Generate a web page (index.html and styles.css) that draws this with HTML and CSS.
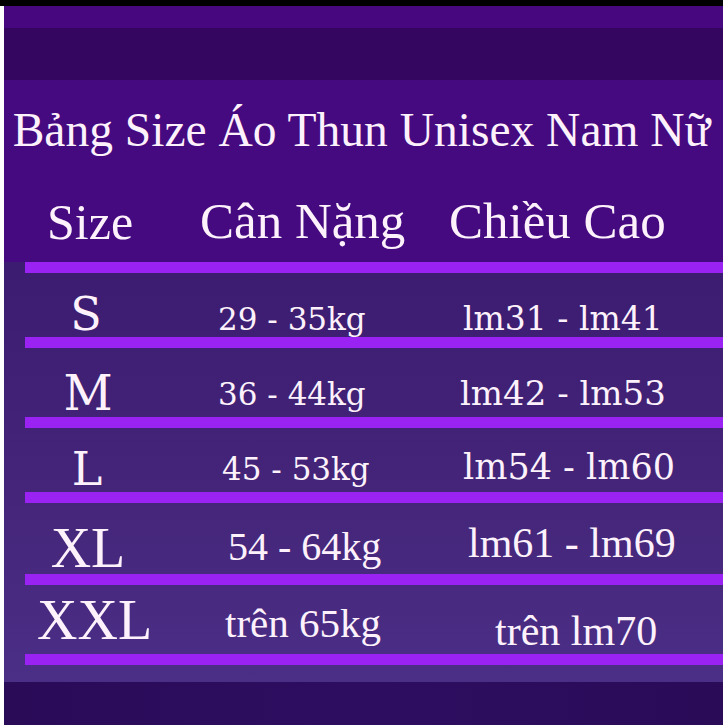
FILE: index.html
```html
<!DOCTYPE html>
<html lang="vi">
<head>
<meta charset="utf-8">
<title>Bảng Size Áo Thun Unisex Nam Nữ</title>
<link rel="stylesheet" href="styles.css">
</head>
<body>
<div class="page">
  <div class="poster">
    <div class="topbar"></div>
    <div class="band1"></div>
    <div class="band2"></div>
    <div class="head">
      <h1 class="title">Bảng Size Áo Thun Unisex Nam Nữ</h1>
      <div class="row hdr">
        <div class="cell c1">Size</div>
        <div class="cell c2">Cân Nặng</div>
        <div class="cell c3">Chiều Cao</div>
      </div>
    </div>
    <div class="table">
      <div class="bar"></div>
      <div class="row r-s">
        <div class="cell c1 wide-l">S</div>
        <div class="cell c2 wide-n">29 - 35kg</div>
        <div class="cell c3 wide-n">lm31 - lm41</div>
      </div>
      <div class="bar"></div>
      <div class="row r-m">
        <div class="cell c1 wide-l big">M</div>
        <div class="cell c2 wide-n">36 - 44kg</div>
        <div class="cell c3 wide-n">lm42 - lm53</div>
      </div>
      <div class="bar"></div>
      <div class="row r-l">
        <div class="cell c1 wide-l">L</div>
        <div class="cell c2 wide-n">45 - 53kg</div>
        <div class="cell c3 wide-n">lm54 - lm60</div>
      </div>
      <div class="bar"></div>
      <div class="row r-xl">
        <div class="cell c1 times-l">XL</div>
        <div class="cell c2 times-n">54 - 64kg</div>
        <div class="cell c3 times-n">lm61 - lm69</div>
      </div>
      <div class="bar"></div>
      <div class="row r-xxl">
        <div class="cell c1 times-l">XXL</div>
        <div class="cell c2 times-n">trên 65kg</div>
        <div class="cell c3 times-n">trên lm70</div>
      </div>
      <div class="bar"></div>
      <div class="tail"></div>
    </div>
    <div class="foot"></div>
  </div>
</div>
</body>
</html>
```
FILE: styles.css
```css
* { box-sizing: border-box; }
html, body { margin: 0; padding: 0; background: #ffffff; }
.page {
  width: 727px;
  height: 727px;
  background: #ffffff;
  overflow: hidden;
}
.poster {
  width: 719px;
  margin-left: 4px;
  display: flex;
  flex-direction: column;
  color: #fdf2fb;
  font-family: "Liberation Serif", "Times New Roman", serif;
}
.topbar { height: 6px; background: #000000; margin-left: -4px; }
.band1 { height: 22px; background: #47087f; }
.band2 { height: 52px; background: #35065f; }
.head {
  height: 182px;
  background: #450a80;
  padding-top: 26px;
}
.title {
  margin: 0;
  font-weight: normal;
  font-size: 47.5px;
  line-height: 48px;
  text-align: center;
  white-space: nowrap;
  padding-right: 4px;
}
.row {
  display: grid;
  grid-template-columns: 168px 240px 1fr;
  align-items: end;
}
.cell { white-space: nowrap; line-height: 1; }
.c1 { text-align: center; }
.hdr { margin-top: 42px; font-size: 50px; }
.hdr .c1 { text-align: left; padding-left: 43px; }
.hdr .c2 { padding-left: 28px; font-size: 51px; }
.hdr .c3 { padding-left: 37px; font-size: 51px; }

.table {
  height: 420px;
  background: linear-gradient(180deg, #3c1c71 0%, #432478 50%, #4b2e86 100%);
  display: flex;
  flex-direction: column;
}
.bar {
  height: 11px;
  margin-left: 21px;
  background: #9a22f2;
  flex: none;
}
.r-s { height: 64px; }
.r-m { height: 69px; }
.r-l { height: 64px; }
.r-xl { height: 71px; }
.r-xxl { height: 69px; }
.tail { height: 17px; }

.wide-l { font-family: "DejaVu Serif", serif; font-size: 46px; }
.wide-l.big { font-size: 48px; }
.wide-n { font-family: "DejaVu Serif", serif; font-size: 31px; }
.times-l { font-size: 56px; }
.times-n { font-size: 40px; }

.r-s .c1 { padding-bottom: 0; padding-right: 4px; }
.r-s .c2 { padding-left: 46px; padding-bottom: 2px; }
.r-s .c3 { padding-left: 51px; padding-bottom: 2px; font-size: 33px; }

.r-m .c1 { padding-bottom: 0; }
.r-m .c2 { padding-left: 46px; padding-bottom: 7px; }
.r-m .c3 { padding-left: 48px; padding-bottom: 7px; font-size: 34px; }

.r-l .c1 { padding-bottom: 0; padding-right: 2px; }
.r-l .c2 { padding-left: 50px; padding-bottom: 7px; }
.r-l .c3 { padding-left: 51px; padding-bottom: 7px; font-size: 35px; }

.r-xl .c1 { margin-bottom: -2px; }
.r-xl .c2 { padding-left: 56px; padding-bottom: 7px; }
.r-xl .c3 { padding-left: 56px; padding-bottom: 10px; font-size: 42px; }

.r-xxl .c1 { padding-bottom: 6px; text-align: left; padding-left: 33px; }
.r-xxl .c2 { padding-left: 53px; padding-bottom: 10px; font-size: 41px; }
.r-xxl .c3 { padding-left: 83px; padding-bottom: 2px; font-size: 42px; }

.foot {
  height: 43px;
  background: linear-gradient(90deg, #2a0b58 0%, #2d0d60 50%, #2a0b58 100%);
}
```
